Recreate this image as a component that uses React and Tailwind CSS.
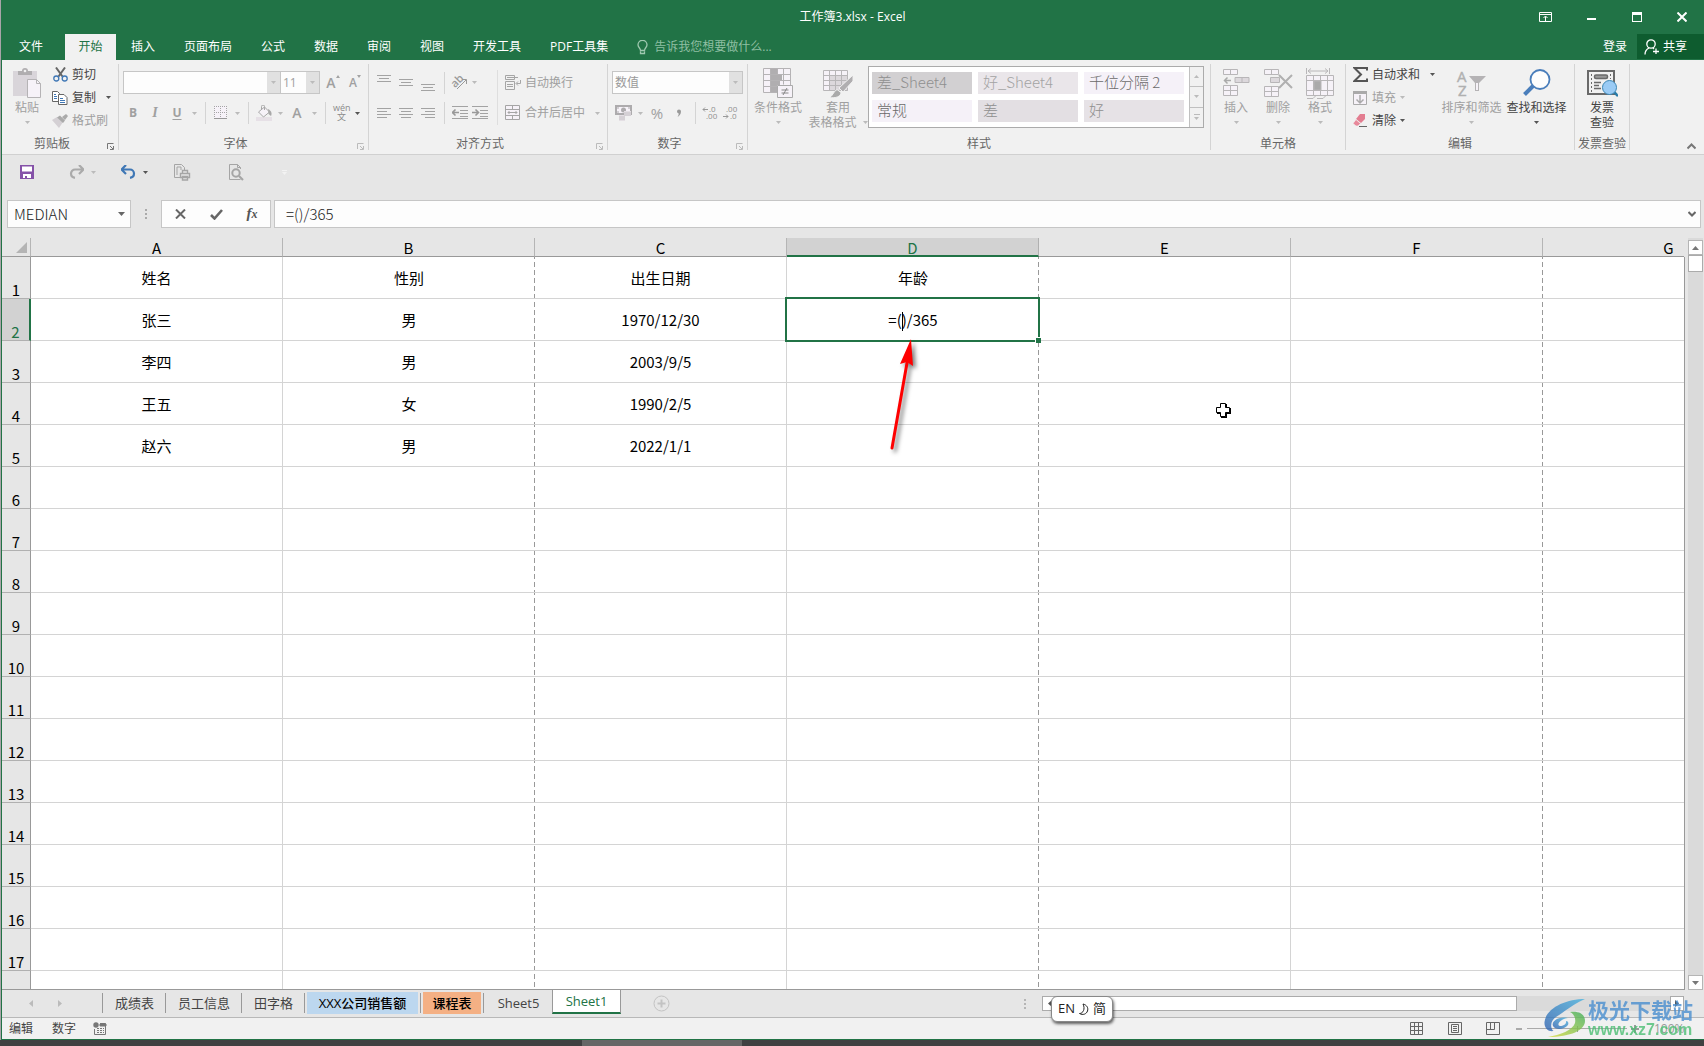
import React from 'react'

const uiFont = "font-['Open_Sans','Noto_Sans_CJK_SC',sans-serif]"
const cellFont = "font-['Noto_Sans_CJK_SC',sans-serif]"

const menuTabs = ['插入', '页面布局', '公式', '数据', '审阅', '视图', '开发工具', 'PDF工具集']

const columns = ['A', 'B', 'C', 'D', 'E', 'F', 'G']

const rows = [
  ['姓名', '性别', '出生日期', '年龄'],
  ['张三', '男', '1970/12/30', ''],
  ['李四', '男', '2003/9/5', ''],
  ['王五', '女', '1990/2/5', ''],
  ['赵六', '男', '2022/1/1', ''],
]

const rowNumbers = Array.from({ length: 18 }, (_, i) => i + 1)

const cellStyles = [
  { name: '差_Sheet4', look: 'bg-[#d2d0d2] text-[#8f8f8f]' },
  { name: '好_Sheet4', look: 'bg-[#eae6ea] text-[#a3a3a3]' },
  { name: '千位分隔 2', look: 'bg-[#f5f1f8] text-[#6a6a6a]' },
  { name: '常规', look: 'bg-[#f5f1f8] text-[#6a6a6a]' },
  { name: '差', look: 'bg-[#e3dfe3] text-[#8f8f8f]' },
  { name: '好', look: 'bg-[#e6e2e6] text-[#8f8f8f]' },
]

/* ---------- small building blocks ---------- */

const Caret = ({ dark }) => (
  <svg width="5" height="3" viewBox="0 0 5 3" className={dark ? 'text-[#555]' : 'text-[#bbb]'}>
    <path d="M0 0h5L2.5 3z" fill="currentColor" />
  </svg>
)

const Drop = ({ label, dark }) => (
  <button aria-label={label} className="flex h-full w-3 items-center justify-center">
    <Caret dark={dark} />
  </button>
)

const Tool = ({ label, className = 'w-5', children }) => (
  <button aria-label={label} className={`flex h-full items-center justify-center text-[#a0a0a0] ${className}`}>
    {children}
  </button>
)

const Sep = () => <div className="mx-[5px] h-[22px] w-px bg-[#d4d4d4]" />

const Group = ({ title, launcher, darkLauncher, className, children }) => (
  <>
    <section className={`flex h-[90px] shrink-0 flex-col ${className}`}>
      <div className="flex h-[72px]">{children}</div>
      <div className={`relative h-[18px] text-center leading-5 text-[#666] ${launcher ? 'pr-4' : ''}`}>
        {title}
        {launcher && (
          <button aria-label={`${title}设置`} className={`absolute right-1 bottom-[2px] ${darkLauncher ? 'text-[#777]' : 'text-[#bbb]'}`}>
            <svg width="7" height="7" viewBox="0 0 7 7" fill="none" stroke="currentColor">
              <path d="M.5 6V.5H6.500M3 3l3 3M6.500 3v3.500H3" />
            </svg>
          </button>
        )}
      </div>
    </section>
    <div className="mt-[2px] h-[86px] w-px shrink-0 bg-[#d4d4d4]" />
  </>
)

const BigButton = ({ icon, label, second, dark, className }) => (
  <button className={`flex flex-col items-center pt-[6px] ${dark ? 'text-[#444]' : 'text-[#a0a0a0]'} ${className}`}>
    <span className="flex h-[30px] items-center">{icon}</span>
    <span className="mt-[2px] leading-[15px] whitespace-nowrap">{label}</span>
    <span className="flex h-[15px] items-center justify-center gap-[6px] leading-[15px] whitespace-nowrap">
      {second}
      {second !== '查验' && <Caret dark={dark} />}
    </span>
  </button>
)

const RowButton = ({ icon, label, dark, arrow }) => (
  <button className={`flex h-[23px] items-center whitespace-nowrap ${dark ? 'text-[#444]' : 'text-[#a0a0a0]'}`}>
    <span className="mr-1 flex w-4 justify-center">{icon}</span>
    <span>{label}</span>
    {arrow && <span className={arrow === 'far' ? 'ml-[10px]' : 'ml-1'}><Caret dark={dark} /></span>}
  </button>
)

const Lines = ({ d }) => (
  <svg width="16" height="22" viewBox="0 0 16 22" fill="none" stroke="#a3a3a3">
    <path d={d} />
  </svg>
)

/* ---------- icons ---------- */

const PasteIcon = () => (
  <svg width="30" height="30" viewBox="0 0 30 30">
    <path d="M1 3h24v25H1z" fill="#d9d5da" />
    <path d="M6 7V3h4a3 3 0 0 1 6 0h4v4z" fill="#b0aeb0" />
    <circle cx="13" cy="3" r="1.300" fill="#f1f1f1" />
    <path d="M15.500 11.500h9l4 4v14h-13z" fill="#f6f2f8" stroke="#b5b3b5" />
    <path d="M24.500 11.500v4h4" fill="none" stroke="#b5b3b5" />
  </svg>
)

const CutIcon = () => (
  <svg width="15" height="15" viewBox="0 0 15 15" fill="none">
    <path d="M3 .5l6.500 9M12 .5l-6.500 9" stroke="#666" strokeWidth="2" />
    <circle cx="3.300" cy="11.500" r="2.500" stroke="#3f77b5" strokeWidth="1.300" />
    <circle cx="11.700" cy="11.500" r="2.500" stroke="#3f77b5" strokeWidth="1.300" />
  </svg>
)

const CopyIcon = () => (
  <svg width="16" height="14" viewBox="0 0 16 14" fill="#fff" stroke="#666">
    <path d="M.5.5h5l2 2v8h-7z" />
    <path d="M6.500 3.500h5.500l3 3v7H6.500z" />
    <path d="M2 3.500h2M2 5.500h3M2 7.500h3M8 7.500h3M8 9.500h5M8 11.500h5" stroke="#3f77b5" />
  </svg>
)

const BrushIcon = () => (
  <svg width="16" height="14" viewBox="0 0 16 14">
    <path d="M0 6l5-3 6 5-4 6z" fill="#d4d0d4" />
    <path d="M5 3.500l3-2 5 5-2 2.500zM10 3l4-3 2 2-3 4z" fill="#aaa" />
  </svg>
)

const BordersIcon = () => (
  <svg width="14" height="14" viewBox="0 0 14 14">
    <path d="M0 0h13v12H0z" fill="#f6f2f8" />
    <path d="M.5 0v12M6.500 0v12M12.500 0v12M0 .5h13M0 6.500h13" stroke="#a5a5a5" strokeDasharray="1 1" />
    <path d="M0 12.500h13" stroke="#999" />
  </svg>
)

const FillIcon = () => (
  <svg width="17" height="16" viewBox="0 0 17 16">
    <path d="M0 12h16v4H0z" fill="#e6e0e6" />
    <path d="M2.500 7l6-5 5 5-6 5z" fill="#f6f2f8" stroke="#a8a8a8" />
    <path d="M5.500 5V1.500a1.500 1.500 0 0 1 3 0V5" fill="none" stroke="#a8a8a8" />
    <path d="M12 4c4 2 4 5 3 7l-2.500-2z" fill="#a8a8a8" />
  </svg>
)

const OrientIcon = () => (
  <svg width="17" height="17" viewBox="0 0 17 17" className="overflow-visible">
    <text x="0" y="11" fontSize="11" fontWeight="600" fill="#999" transform="rotate(-45 6 8)">ab</text>
    <path d="M6 15l9-9M11 5.500h4.500V10" fill="none" stroke="#999" />
  </svg>
)

const Indent = ({ right }) => (
  <svg width="16" height="14" viewBox="0 0 16 14" fill="none" stroke="#a3a3a3">
    <path d="M0 .5h16M8 4.500h8M8 7.500h8M8 10.500h8M0 12.500h16" />
    <path d={right ? 'M0 6.500h6M3.500 3.500l3 3-3 3' : 'M1 6.500h6M3.500 3.500l-3 3 3 3'} stroke="#999" strokeWidth="1.600" />
  </svg>
)

const WrapIcon = () => (
  <svg width="16" height="16" viewBox="0 0 16 16" fill="none" stroke="#a5a5a5">
    <path d="M.5.5h9v4h-9zM.5 6.500h9v8h-9zM2 2.500h11M2 9.500h6M2 11.500h6M15.500 5v3.500h-4M13 6.500l-2 2 2 2" />
  </svg>
)

const MergeIcon = () => (
  <svg width="16" height="16" viewBox="0 0 16 16" fill="#f6f2f8" stroke="#a5a5a5">
    <path d="M.5.5h14v14H.5zM.5 4.500h14M.5 10.500h14M7.500.5v4M7.500 10.500v4" />
    <path d="M3 7.500h9M4.500 6L3 7.500 4.500 9M10.500 6L12 7.500 10.500 9" fill="none" />
  </svg>
)

const MoneyIcon = () => (
  <svg width="17" height="16" viewBox="0 0 17 16">
    <path d="M1 1h15v8H1z" fill="#f6f2f8" stroke="#adabad" strokeWidth="2" />
    <circle cx="8.500" cy="5" r="2.500" fill="#adabad" />
    <path d="M2 3h2M2 7h2M13 3h2" stroke="#adabad" />
    <path d="M9 6h7v5H9zM4 10h6v6H4z" fill="#e4dfe4" />
    <path d="M9 8h7M9 10h7M4 12h6M4 14h6" stroke="#c6c2c6" />
  </svg>
)

const Decimals = ({ top, bottom, more }) => (
  <svg width="16" height="16" viewBox="0 0 16 16" fontSize="8" fill="#8f8f8f" className="overflow-visible">
    <text x={more ? 7 : 4} y="7">{top}</text>
    <text x={more ? 4 : 8} y="14">{bottom}</text>
    <path
      d={more ? 'M1 4.500h5M3 2.500l-2 2 2 2' : 'M1 11.500h5M4 9.500l2 2-2 2'}
      fill="none"
      stroke="#999"
    />
  </svg>
)

const CondIcon = () => (
  <svg width="31" height="30" viewBox="0 0 31 30">
    <path d="M.5.5h27v24H.5z" fill="#f6f2f8" />
    <path d="M8 1h6v23H8zM14 7h5v5h-5zM14 13h3v4h-3z" fill="#b0aeb0" />
    <path d="M.5.5h27v24H.5zM7.500.5v24M14.500.5v6M20.500.5v16M.5 6.500h27M.5 12.500h27M.5 18.500h15" fill="none" stroke="#b5b3b5" />
    <path d="M14.500 17.500h15v12h-15z" fill="#f6f2f8" stroke="#aaa" />
    <path d="M18.500 22h7M18.500 25h7M24 20l-4 7" stroke="#888" fill="none" />
  </svg>
)

const TableFormatIcon = () => (
  <svg width="30" height="29" viewBox="0 0 30 29">
    <path d="M.5 1.500h25v20H.5z" fill="#f6f2f8" />
    <path d="M7 7h18v15H7z" fill="#dcd8dc" />
    <path d="M.5 1.500h24v20H.5zM6.500 1.500v20M12.500 1.500v20M18.500 1.500v20M.5 6.500h24M.5 11.500h24M.5 16.500h24" fill="none" stroke="#b8b6b8" />
    <path d="M30 6v6L20 23l-4-4z" fill="#b0aeb0" stroke="#f1f1f1" />
    <path d="M6 28.500c4-1 4-6 8-8l4 3c0 4-5 6-12 5z" fill="#aaa" stroke="#f1f1f1" />
  </svg>
)

const InsertIcon = () => (
  <svg width="27" height="28" viewBox="0 0 27 28" fill="#f6f2f8" stroke="#b8b6b8">
    <path d="M.5.5h14v5H.5zM7.500.5v5M.5 16.500h14v10H.5zM7.500 16.500v10M.5 21.500h14" />
    <path d="M12 8.500h14v5H12zM19 8.500v5" fill="#dcd8dc" />
    <path d="M2 11.500h6M4.500 8.500l-3 3 3 3" fill="none" strokeWidth="1.500" stroke="#aaa" />
  </svg>
)

const DeleteIcon = () => (
  <svg width="29" height="28" viewBox="0 0 29 28" fill="#f6f2f8" stroke="#b8b6b8">
    <path d="M.5.5h14v5H.5zM7.500.5v5M.5 17.500h14v10H.5zM7.500 17.500v10M.5 22.500h14" />
    <path d="M6.500 8.500h9v5h-9z" fill="#dcd8dc" />
    <path d="M15 6l13 13M28 6L15 19" stroke="#b0b0b0" strokeWidth="2" fill="none" />
  </svg>
)

const FormatIcon = () => (
  <svg width="29" height="31" viewBox="0 0 29 31" fill="#f6f2f8" stroke="#b8b6b8">
    <path d="M.5 7.500h27v20H.5zM7.500 7.500v20M14.500 7.500v20M21.500 7.500v20M.5 12.500h27M.5 22.500h27" />
    <path d="M8 13h7v9H8z" fill="#aaa" />
    <path d="M.5 0v6M23.500 0v6M2 3h20M5 .5L2 3l3 2.500M19 .5L22 3l-3 2.500M1 30.500h6l3-3M11 30.500h6l3-3" fill="none" />
  </svg>
)

const FillDownIcon = () => (
  <svg width="14" height="16" viewBox="0 0 14 16" fill="none" stroke="#aaa">
    <path d="M.5 1.500h13v13H.5z" fill="#f6f2f8" />
    <path d="M0 2.500h14" strokeWidth="3" />
    <path d="M7 5v8M3.500 9.500L7 13l3.500-3.500" strokeWidth="1.500" />
  </svg>
)

const EraserIcon = () => (
  <svg width="14" height="13" viewBox="0 0 14 13">
    <path d="M7 0l5 0 0 5-4 4-5-4z" fill="#e37d90" />
    <path d="M3 5.500l4.500 4L5 12H3L0 9.500z" fill="#e8899b" stroke="#f1f1f1" strokeWidth=".7" />
    <path d="M6 12.500h8" stroke="#666" />
  </svg>
)

const SortIcon = () => (
  <svg width="30" height="28" viewBox="0 0 30 28" className="overflow-visible">
    <text x="0" y="13" fontSize="15" fill="#b0b0b0" stroke="#b0b0b0" strokeWidth=".4">A</text>
    <text x="1" y="27" fontSize="15" fill="#b0b0b0" stroke="#b0b0b0" strokeWidth=".4">Z</text>
    <path d="M12 7h17l-7 7v8h-4v-8z" fill="#b5b3b5" />
    <path d="M19 14h2v7h-2z" fill="#f6f2f8" />
  </svg>
)

const FindIcon = () => (
  <svg width="28" height="28" viewBox="0 0 28 28" fill="none" stroke="#4a7ebb">
    <path d="M10 17l-8.500 8.500" strokeWidth="4" />
    <circle cx="17" cy="10.500" r="9.500" fill="#fdfdfd" strokeWidth="1.800" />
  </svg>
)

const InvoiceIcon = () => (
  <svg width="31" height="27" viewBox="0 0 31 27" fill="none" stroke="#6a6a6a">
    <path d="M1 1h26v23H1z" strokeWidth="2" />
    <path d="M4.500 4v18M23.500 4v5" strokeDasharray="2 2" />
    <rect x="7.500" y="5" width="13" height="3.500" rx="1.500" fill="#999" strokeWidth="1.500" />
    <path d="M7 12.500h7M7 15.500h5M7 18.500h7" strokeWidth="1.400" />
    <path d="M26 21l5 5" stroke="#2a7ba8" strokeWidth="2.500" />
    <circle cx="22.500" cy="17.500" r="7" fill="#9acbf5" stroke="#3d87b5" />
  </svg>
)

const SaveIcon = () => (
  <svg width="14" height="14" viewBox="0 0 14 14">
    <path d="M0 0h14v14H0z" fill="#8552a8" />
    <path d="M2 1.500h10v5H2zM3 9h8v4H3z" fill="#fff" />
    <path d="M5 11h2v2H5z" fill="#8552a8" />
  </svg>
)

const ArrowCurve = ({ color, flip }) => (
  <svg width="15" height="14" viewBox="0 0 15 14" fill="none" stroke={color} strokeWidth="2.200">
    <path d={flip ? 'M10 0l4.500 4.500L10 9M13 4.500H6a4 4 0 0 0-4 4C2 11 4 12.500 6 12.800' : 'M5 0L.5 4.500 5 9M2 4.500h7a4 4 0 0 1 4 4c0 2.500-2 4-4 4.300'} />
  </svg>
)

const QuickPrintIcon = () => (
  <svg width="17" height="17" viewBox="0 0 17 17" fill="none" stroke="#a5a5a5">
    <path d="M6 13.500H.5V.5h7l3 3V6M3 11V3h4v3" />
    <path d="M6.500 9.500h9v4h-9zM8.500 9V6.500h5V9M8.500 12.500h5v3.500h-5z" fill="#e6e6e6" strokeWidth="1.400" />
  </svg>
)

const PreviewIcon = () => (
  <svg width="15" height="17" viewBox="0 0 15 17" fill="none" stroke="#a5a5a5">
    <path d="M11.500 5V3.500l-3-3H.5v15h11M8.500.5v3h3" />
    <circle cx="7" cy="9" r="3.700" strokeWidth="2" />
    <path d="M10 12l4 4" strokeWidth="2.200" />
  </svg>
)

const WatermarkLogo = () => (
  <svg width="42" height="40" viewBox="0 0 42 40">
    <defs>
      <linearGradient id="wb" x1="0" y1="1" x2="1" y2="0">
        <stop offset="0" stopColor="#2f62b0" />
        <stop offset="1" stopColor="#4bb4e0" />
      </linearGradient>
      <linearGradient id="wg" x1="0" y1="1" x2="1" y2="0">
        <stop offset="0" stopColor="#d9dc3c" />
        <stop offset="1" stopColor="#3fae5c" />
      </linearGradient>
    </defs>
    <path d="M41 1C22 1 2 10 .5 24c-.5 6 4 10 9 9-4-4-3-11 4-15C20 14 26 8 41 1z" fill="url(#wb)" />
    <path d="M24 20c-9-2-17 3-15 8 2 4 11 4 15-1 1-2 0-4-2-4 1 3-3 5-6 5-4-1 0-7 8-8z" fill="url(#wb)" />
    <path d="M26 14c9-1 15 2 15 9 0 9-14 16-37 16 12-2 25-7 27-14 1-5-1-9-5-11z" fill="url(#wg)" />
  </svg>
)

/* ---------- page sections ---------- */

const TitleBar = () => (
  <header className="bg-[#217346] text-white">
    <div className="relative flex h-[34px] items-center justify-end">
      <h1 className="absolute inset-x-0 text-center leading-[36px]">工作簿3.xlsx - Excel</h1>
      <button aria-label="功能区显示选项" className="relative flex h-full w-[46px] items-center justify-center">
        <svg width="13" height="10" viewBox="0 0 13 10" fill="none" stroke="#fff">
          <path d="M.5.5h12v9H.5zM1 2.500h11M6.500 9V4.500M4.500 6l2-2 2 2" />
        </svg>
      </button>
      <button aria-label="最小化" className="relative flex h-full w-[46px] items-center justify-center">
        <span className="mt-1 h-[2px] w-[9px] bg-white" />
      </button>
      <button aria-label="最大化" className="relative flex h-full w-[46px] items-center justify-center">
        <span className="h-[10px] w-[10px] border border-t-[3px] border-white" />
      </button>
      <button aria-label="关闭" className="relative flex h-full w-[44px] items-center justify-center">
        <svg width="10" height="10" viewBox="0 0 10 10" stroke="#fff" strokeWidth="2">
          <path d="M.5.5l9 9M9.500.5l-9 9" />
        </svg>
      </button>
    </div>
    <nav className="flex h-[26px] items-center">
      <button className="w-16 pr-1 leading-[22px]">文件</button>
      <button className="mr-[3px] h-full w-[51px] bg-[#f1f1f1] text-[#217346]">开始</button>
      {menuTabs.map((tab) => (
        <button key={tab} className="mr-[5px] px-3 leading-[22px] whitespace-nowrap">{tab}</button>
      ))}
      <label className="ml-3 flex items-center gap-[6px]">
        <svg width="11" height="15" viewBox="0 0 11 15" fill="none" stroke="#9fc9b0" strokeWidth="1.300">
          <path d="M3.500 10.500C3.500 8 1 7.500 1 4.800a4.500 4.500 0 0 1 9 0c0 2.700-2.500 3.200-2.500 5.700zM3.500 11.500v2h4v-2" />
        </svg>
        <input aria-label="告诉我" placeholder="告诉我您想要做什么..." className="w-40 bg-transparent placeholder:text-[#8fbfa3]" />
      </label>
      <button className="ml-auto px-[10px]">登录</button>
      <button className="flex h-[25px] w-[67px] items-center gap-1 self-start bg-[#0e5c2f] pl-[7px]">
        <svg width="15" height="16" viewBox="0 0 15 16" fill="none" stroke="#fff" strokeWidth="1.300">
          <circle cx="7" cy="5" r="4.200" />
          <path d="M1 15.500c0-3.500 2-5.500 4-6.500M9 9l1 1M12 9.500V15M9 12.500h6" />
        </svg>
        共享
      </button>
    </nav>
  </header>
)

const Ribbon = () => (
  <div className="flex h-[95px] shrink-0 border-b border-[#d0d0d0] bg-[#f1f1f1] pt-[2px]">
    <Group title="剪贴板" launcher darkLauncher className="w-[116px]">
      <BigButton className="w-[50px]" icon={<PasteIcon />} label="粘贴" />
      <div className="flex flex-col pt-px">
        <RowButton dark icon={<CutIcon />} label="剪切" />
        <RowButton dark arrow="far" icon={<CopyIcon />} label="复制" />
        <RowButton icon={<BrushIcon />} label="格式刷" />
      </div>
    </Group>

    <Group title="字体" launcher className="w-[249px]">
      <div className="flex flex-col gap-2 pt-[9px] pl-[3px]">
        <div className="flex h-[23px] items-center pl-px">
          <div className="flex h-full w-[158px] border border-[#c6c6c6] bg-[#fdfdfd]">
            <input aria-label="字体" className="min-w-0 flex-1" />
            <button aria-label="选择字体" className="flex w-[13px] items-center justify-center bg-[#e1e1e1]"><Caret /></button>
          </div>
          <div className="-ml-px flex h-full w-10 border border-[#c6c6c6] bg-[#fdfdfd]">
            <input aria-label="字号" defaultValue="11" className="min-w-0 flex-1 pl-[2px] text-[#a0a0a0]" />
            <button aria-label="选择字号" className="flex w-[13px] items-center justify-center bg-[#e1e1e1]"><Caret /></button>
          </div>
          <Tool label="增大字号" className="ml-[2px] w-[22px]">
            <span className="text-sm font-semibold">A</span>
            <svg width="4" height="3" className="mb-3"><path d="M0 3h4L2 0z" fill="#a3a3a3" /></svg>
          </Tool>
          <Tool label="减小字号" className="w-[22px]">
            <span className="text-xs font-semibold">A</span>
            <svg width="4" height="3" className="mb-3"><path d="M0 0h4L2 3z" fill="#a3a3a3" /></svg>
          </Tool>
        </div>
        <div className="flex h-[22px] items-center">
          <Tool label="加粗" className="w-[22px] font-bold">B</Tool>
          <Tool label="倾斜" className="w-[22px] font-['Liberation_Serif',serif] text-sm font-bold italic">I</Tool>
          <Tool label="下划线" className="w-[22px] font-bold underline underline-offset-2">U</Tool>
          <Drop label="下划线样式" />
          <Sep />
          <Tool label="边框"><BordersIcon /></Tool>
          <Drop label="边框样式" />
          <Sep />
          <Tool label="填充颜色"><FillIcon /></Tool>
          <Drop label="选择填充颜色" />
          <Tool label="字体颜色" className="w-[22px] text-sm font-semibold">A</Tool>
          <Drop label="选择字体颜色" />
          <Sep />
          <Tool label="拼音">
            <svg width="18" height="18" viewBox="0 0 18 18" fill="#8a8a8a" className="overflow-visible">
              <text x="1" y="7" fontSize="9">wén</text>
              <text x="5" y="16" fontSize="9">文</text>
            </svg>
          </Tool>
          <Drop label="拼音设置" dark />
        </div>
      </div>
    </Group>

    <Group title="对齐方式" launcher className="w-[238px]">
      <div className="flex flex-col gap-2 pt-[9px] pl-1">
        <div className="flex h-[23px] items-center">
          <Tool label="顶端对齐" className="w-[22px]"><Lines d="M1 3.500h14M3 6.500h10M1 9.500h14" /></Tool>
          <Tool label="垂直居中" className="w-[22px]"><Lines d="M1 7.500h14M3 10.500h10M1 13.500h14" /></Tool>
          <Tool label="底端对齐" className="w-[22px]"><Lines d="M1 12.500h14M3 15.500h10M1 18.500h14" /></Tool>
          <Sep />
          <Tool label="方向" className="w-[18px]"><OrientIcon /></Tool>
          <Drop label="方向选项" />
        </div>
        <div className="flex h-[22px] items-center">
          <Tool label="左对齐" className="w-[22px]"><Lines d="M1 6.500h14M1 9.500h10M1 12.500h14M1 15.500h10" /></Tool>
          <Tool label="居中" className="w-[22px]"><Lines d="M1 6.500h14M3 9.500h10M1 12.500h14M3 15.500h10" /></Tool>
          <Tool label="右对齐" className="w-[22px]"><Lines d="M1 6.500h14M5 9.500h10M1 12.500h14M5 15.500h10" /></Tool>
          <Sep />
          <Tool label="减少缩进量"><Indent /></Tool>
          <Tool label="增加缩进量"><Indent right /></Tool>
        </div>
      </div>
      <div className="mx-[7px] mt-2 h-[55px] w-px bg-[#dedede]" />
      <div className="flex flex-col gap-2 pt-[9px]">
        <button className="flex h-[23px] items-center gap-1 text-[#a0a0a0]"><WrapIcon />自动换行</button>
        <button className="flex h-[22px] items-center gap-1 text-[#a0a0a0]"><MergeIcon />合并后居中<span className="ml-[6px]"><Caret /></span></button>
      </div>
    </Group>

    <Group title="数字" launcher className="w-[139px]">
      <div className="flex flex-col gap-2 pt-[9px] pl-1">
        <div className="flex h-[23px] w-[131px] border border-[#c6c6c6] bg-[#fdfdfd]">
          <select aria-label="数字格式" className="min-w-0 flex-1 appearance-none pl-[2px] text-[#999]">
            <option>数值</option>
            <option>常规</option>
          </select>
          <span className="flex w-[13px] items-center justify-center bg-[#e1e1e1]"><Caret /></span>
        </div>
        <div className="flex h-[22px] items-center">
          <Tool label="会计数字格式" className="w-[22px]"><MoneyIcon /></Tool>
          <Drop label="货币选项" />
          <Tool label="百分比样式" className="w-[22px] text-[15px]">%</Tool>
          <Tool label="千位分隔样式" className="w-[22px]">
            <svg width="6" height="8" viewBox="0 0 6 8"><path d="M1 2.500a2 2 0 0 1 4 0C5 5 3.500 7 1.500 8 2.500 6.500 2.700 5.500 2.700 4.500A2 2 0 0 1 1 2.500z" fill="#999" /></svg>
          </Tool>
          <Sep />
          <Tool label="增加小数位数" className="w-[18px]"><Decimals more top=".0" bottom=".00" /></Tool>
          <Tool label="减少小数位数" className="w-[22px]"><Decimals top=".00" bottom=".0" /></Tool>
        </div>
      </div>
    </Group>

    <Group title="样式" className="w-[462px]">
      <BigButton className="w-[60px] shrink-0" icon={<CondIcon />} label="条件格式" />
      <BigButton className="w-[60px] shrink-0" icon={<TableFormatIcon />} label="套用" second="表格格式" />
      <div className="mt-1 flex h-[62px] border border-[#ababab] bg-white">
        <div className="grid grid-cols-3 gap-[6px] p-[5px] pl-[3px]">
          {cellStyles.map((s) => (
            <button key={s.name} className={`h-[22px] w-[100px] pb-[2px] pl-[5px] text-left text-[15px] leading-5 font-light ${cellFont} ${s.look}`}>{s.name}</button>
          ))}
        </div>
        <div className="flex w-[14px] flex-col divide-y divide-[#c0c0c0] border-l border-[#c0c0c0] bg-[#f1f1f1]">
          <button aria-label="上一行" className="flex flex-1 items-center justify-center"><span className="rotate-180"><Caret /></span></button>
          <button aria-label="下一行" className="flex flex-1 items-center justify-center"><Caret /></button>
          <button aria-label="其他样式" className="flex flex-1 flex-col items-center justify-center gap-[2px]"><span className="h-px w-[6px] bg-[#bbb]" /><Caret /></button>
        </div>
      </div>
    </Group>

    <Group title="单元格" className="w-[134px]">
      <div className="flex pl-1">
        <BigButton className="w-[42px]" icon={<InsertIcon />} label="插入" />
        <BigButton className="w-[42px]" icon={<DeleteIcon />} label="删除" />
        <BigButton className="w-[42px]" icon={<FormatIcon />} label="格式" />
      </div>
    </Group>

    <Group title="编辑" className="w-[228px]">
      <div className="flex w-[93px] flex-col pt-px pl-[6px]">
        <RowButton
          dark
          arrow="far"
          label="自动求和"
          icon={<svg width="15" height="15" viewBox="0 0 15 15" fill="none" stroke="#555" strokeWidth="2"><path d="M14 3.500V1H1.500L8 7.500 1.500 14H14v-2.500" /></svg>}
        />
        <RowButton arrow="near" icon={<FillDownIcon />} label="填充" />
        <RowButton dark arrow="near" icon={<EraserIcon />} label="清除" />
      </div>
      <BigButton className="w-[65px]" icon={<SortIcon />} label="排序和筛选" />
      <BigButton className="w-[65px]" dark icon={<FindIcon />} label="查找和选择" />
    </Group>

    <Group title="发票查验" className="w-[54px]">
      <BigButton className="w-full" dark icon={<InvoiceIcon />} label="发票" second="查验" />
    </Group>

    <button aria-label="折叠功能区" className="mr-2 mb-1 ml-auto self-end">
      <svg width="9" height="7" viewBox="0 0 9 7" fill="none" stroke="#777" strokeWidth="2"><path d="M.5 5.500l4-4 4 4" /></svg>
    </button>
  </div>
)

const QuickAccess = () => (
  <div className="flex h-[45px] shrink-0 items-start bg-[#e6e6e6] pl-[15px]">
    <div className="flex h-[34px] items-center">
      <Tool label="保存" className="w-5"><SaveIcon /></Tool>
      <Tool label="恢复" className="ml-7 w-[22px]"><ArrowCurve color="#aaa" flip /></Tool>
      <Drop label="恢复列表" />
      <Tool label="撤消" className="ml-[18px] w-[22px]"><ArrowCurve color="#3f77b5" /></Tool>
      <Drop label="撤消列表" dark />
      <Tool label="快速打印" className="ml-[21px] w-5"><QuickPrintIcon /></Tool>
      <Tool label="打印预览" className="ml-[34px] w-5"><PreviewIcon /></Tool>
      <button aria-label="自定义快速访问工具栏" className="ml-9 flex flex-col items-center gap-px">
        <span className="h-px w-[5px] bg-[#f3f3f3]" />
        <svg width="5" height="3"><path d="M0 0h5L2.500 3z" fill="#f3f3f3" /></svg>
      </button>
    </div>
  </div>
)

const FormulaBar = () => (
  <div className={`mb-[10px] flex h-7 shrink-0 pr-[3px] pl-[5px] text-[15px] font-light text-[#222] ${cellFont}`}>
    <div className="flex w-[124px] border border-[#c6c6c6] bg-[#fdfdfd]">
      <input aria-label="名称框" defaultValue="MEDIAN" className="min-w-0 flex-1 pb-px pl-[6px]" />
      <button aria-label="名称列表" className="flex w-[18px] items-center justify-center">
        <svg width="7" height="4"><path d="M0 0h7L3.500 4z" fill="#666" /></svg>
      </button>
    </div>
    <div className="flex w-[30px] flex-col items-center justify-center gap-[2px]">
      <span className="h-[2px] w-[2px] bg-[#aaa]" />
      <span className="h-[2px] w-[2px] bg-[#aaa]" />
      <span className="h-[2px] w-[2px] bg-[#aaa]" />
    </div>
    <div className="flex w-[110px] items-center border border-[#c6c6c6] bg-[#fdfdfd]">
      <button aria-label="取消" className="flex h-full flex-1 items-center justify-center">
        <svg width="11" height="10" viewBox="0 0 11 10" stroke="#666" strokeWidth="2"><path d="M1 .5l9 9M10 .5l-9 9" /></svg>
      </button>
      <button aria-label="输入" className="flex h-full flex-1 items-center justify-center">
        <svg width="13" height="11" viewBox="0 0 13 11" fill="none" stroke="#666" strokeWidth="2.600"><path d="M1 6l3.500 3.500L12 1" /></svg>
      </button>
      <button aria-label="插入函数" className="flex-1 pb-px font-['Liberation_Serif',serif] text-[15px] leading-5 font-bold text-[#555] italic">
        f<span className="text-[12px]">x</span>
      </button>
    </div>
    <div className="ml-[3px] flex flex-1 border border-[#c6c6c6] bg-[#fdfdfd]">
      <input aria-label="编辑栏" defaultValue="=()/365" className="min-w-0 flex-1 pb-px pl-[11px]" />
      <button aria-label="展开编辑栏" className="flex w-4 items-center justify-center">
        <svg width="8" height="6" viewBox="0 0 8 6" fill="none" stroke="#666" strokeWidth="2"><path d="M.5 1L4 4.500 7.500 1" /></svg>
      </button>
    </div>
  </div>
)

/* manual page breaks run down the right edge of B, D and F */
const pageBreak = 'w-[252px] bg-[linear-gradient(#999_0_5px,transparent_5px)] bg-[length:1px_8px] bg-right-top bg-repeat-y'

const Grid = () => (
  <div className="relative min-h-0 flex-1 overflow-hidden border-b border-[#999]">
    <div className="absolute inset-x-0 top-[19px] bottom-0 bg-white" />
    <table className={`relative w-[1793px] table-fixed border-separate border-spacing-0 text-[15px] leading-4 ${cellFont}`}>
      <colgroup>
        <col className="w-[29px]" />
        {columns.map((c) => (
          <col key={c} className={'BDF'.includes(c) ? pageBreak : 'w-[252px]'} />
        ))}
      </colgroup>
      <thead>
        <tr className="h-[19px] leading-4">
          <th aria-label="全选" className="border-r border-b border-[#999] border-r-[#b5b5b5] bg-[#e6e6e6] p-0">
            <svg width="11" height="11" className="ml-[14px]"><path d="M11 0v11H0z" fill="#b4b4b4" /></svg>
          </th>
          {columns.map((c) =>
            c === 'D' ? (
              <th key={c} className="border-r border-b-2 border-[#217346] border-r-[#b0b0b0] bg-[#d2d2d2] p-0 align-bottom leading-[15px] font-normal text-[#217346]">{c}</th>
            ) : (
              <th key={c} className="border-r border-b border-[#999] border-r-[#b5b5b5] bg-[#e6e6e6] p-0 align-bottom font-normal text-black">{c}</th>
            )
          )}
        </tr>
      </thead>
      <tbody>
        {rowNumbers.map((n) => (
          <tr key={n} className="h-[42px]">
            {n === 2 ? (
              <th className="border-r-2 border-b border-[#217346] border-b-[#b0b0b0] bg-[#d2d2d2] p-0 align-bottom font-normal text-[#217346]">{n}</th>
            ) : (
              <th className="border-r border-b border-[#999] border-b-[#b0b0b0] bg-[#e6e6e6] p-0 align-bottom font-normal text-black">{n}</th>
            )}
            {columns.map((c, i) => (
              <td key={c} className={`relative border-b border-[#d4d4d4] p-0 text-center font-normal text-black ${'BDF'.includes(c) ? '' : 'border-r'}`}>
                {n === 2 && c === 'D' ? (
                  <>
                    =(<span className="absolute top-[13px] h-[19px] w-px bg-black" />)/365
                    <span className="absolute -top-[2px] -right-px -bottom-[2px] -left-[2px] z-10 border-2 border-[#217346]" />
                    <span className="absolute -right-[2px] -bottom-[3px] z-10 h-[6px] w-[6px] border-t border-l border-white bg-[#217346]" />
                  </>
                ) : (
                  rows[n - 1]?.[i]
                )}
              </td>
            ))}
          </tr>
        ))}
      </tbody>
    </table>

    {/* red pointer under D2 */}
    <svg width="50" height="122" viewBox="0 0 50 122" className="absolute top-[101px] left-[880px] z-20 drop-shadow-[3px_3px_2px_rgba(0,0,0,0.5)]">
      <path d="M10 109L25 24" stroke="#fe0000" strokeWidth="3" strokeLinecap="round" />
      <path d="M29 0l2 27-6-4-7 2z" fill="#fe0000" />
    </svg>

    {/* cell cursor */}
    <svg width="16" height="16" viewBox="0 0 16 16" className="absolute top-[164px] left-[1213px]">
      <path d="M6 2h6v4h4v6h-4v4H6v-4H2V6h4z" fill="#000" />
      <path d="M5.500 1.500h5v4h4v5h-4v4h-5v-4h-4v-5h4z" fill="#fff" stroke="#000" />
    </svg>
  </div>
)

const VerticalScroll = () => (
  <div className="mr-px ml-[3px] flex w-[15px] flex-col bg-[#dadada] pt-[2px]">
    <button aria-label="向上滚动" className="flex h-[15px] items-center justify-center border border-[#b5b5b5] bg-white">
      <svg width="7" height="4"><path d="M0 4h7L3.500 0z" fill="#777" /></svg>
    </button>
    <div className="h-[17px] border border-[#ababab] bg-white" />
    <button aria-label="向下滚动" className="mt-auto flex h-[15px] items-center justify-center border border-[#b5b5b5] bg-white">
      <svg width="7" height="4"><path d="M0 0h7L3.500 4z" fill="#777" /></svg>
    </button>
  </div>
)

const plainTab = 'h-5 border-l border-[#999] pr-[11px] pl-3 leading-[17px] text-[#444]'

const SheetTabs = () => (
  <div className="flex h-7 shrink-0 items-start border-b border-[#b8b8b8] bg-[#e6e6e6] text-[13px]">
    <div className="flex h-[26px] w-[100px] items-center gap-[25px] pl-[27px]">
      <button aria-label="上一张"><svg width="4" height="7"><path d="M4 0v7L0 3.500z" fill="#bbb" /></svg></button>
      <button aria-label="下一张"><svg width="4" height="7"><path d="M0 0v7l4-3.500z" fill="#bbb" /></svg></button>
    </div>
    <div className="flex shrink-0 pt-[3px] whitespace-nowrap">
      <button className={plainTab}>成绩表</button>
      <button className={plainTab}>员工信息</button>
      <button className={plainTab}>田字格</button>
      <div className="h-5 border-l border-[#999] px-[2px]">
        <button className="-mt-px h-[22px] w-[111px] bg-[#bcd7ef] leading-[19px] font-medium text-black">XXX公司销售额</button>
      </div>
      <div className="h-5 border-l border-[#999] px-[2px]">
        <button className="-mt-px h-[22px] w-[58px] bg-[#f4b084] leading-[19px] font-medium text-black">课程表</button>
      </div>
      <button className={`${plainTab} w-[69px]`}>Sheet5</button>
    </div>
    <button className="-mt-px h-[25px] w-[69px] shrink-0 border-x border-b-2 border-[#999] border-b-[#217346] bg-white pt-px leading-[22px] text-[#217346]">Sheet1</button>
    <button aria-label="新工作表" className="mt-[5px] ml-8">
      <svg width="17" height="17" viewBox="0 0 17 17" fill="none" stroke="#c3c3c3"><circle cx="8.500" cy="8.500" r="7.500" /><path d="M8.500 4.500v8M4.500 8.500h8" strokeWidth="2" /></svg>
    </button>
    <div className="ml-auto flex h-[14px] w-[680px] shrink-0 items-center self-center pr-5">
      <svg width="2" height="10" className="mr-4"><path d="M0 0h2v2H0zM0 4h2v2H0zM0 8h2v2H0z" fill="#b5b5b5" /></svg>
      <div className="flex h-[15px] flex-1 bg-[#dadada]">
        <button aria-label="向左滚动" className="flex w-4 items-center justify-center border border-[#ababab] bg-white">
          <svg width="4" height="7"><path d="M4 0v7L0 3.500z" fill="#555" /></svg>
        </button>
        <div className="mr-auto w-[459px] border border-l-0 border-[#ababab] bg-white" />
        <button aria-label="向右滚动" className="flex w-[14px] items-center justify-center border border-[#ababab] bg-white">
          <svg width="4" height="7"><path d="M0 0v7l4-3.500z" fill="#555" /></svg>
        </button>
      </div>
    </div>
  </div>
)

const StatusBar = () => (
  <footer className="flex h-[22px] shrink-0 items-center border-b border-[#217346] bg-[#f1f1f1] pr-5 pl-[7px] leading-5 text-[#444]">
    <span>编辑</span>
    <span className="ml-[19px]">数字</span>
    <button aria-label="录制宏" className="ml-[17px]">
      <svg width="14" height="13" viewBox="0 0 14 13" fill="none" stroke="#777">
        <path d="M1.500 7v5.500h11v-11H7" />
        <path d="M7 2h6v2H7z" fill="#777" />
        <path d="M4 6.500h7M4 8.500h7M4 10.500h7" strokeDasharray="2 1" />
        <circle cx="3" cy="3" r="2.700" fill="#777" stroke="none" />
      </svg>
    </button>
    <div className="ml-auto flex items-center gap-6">
      <button aria-label="普通">
        <svg width="14" height="13" viewBox="0 0 14 13" fill="none" stroke="#666"><path d="M.5.5h12v12H.5zM4.500 0v13M8.500 0v13M0 4.500h13M0 8.500h13" /></svg>
      </button>
      <button aria-label="页面布局视图">
        <svg width="14" height="13" viewBox="0 0 14 13" fill="none" stroke="#666"><path d="M.5.5h13v12H.5zM3.500 2.500h7v8h-7zM5 4.500h4M5 6.500h4M5 8.500h4" /></svg>
      </button>
      <button aria-label="分页预览">
        <svg width="14" height="13" viewBox="0 0 14 13" fill="none" stroke="#666"><path d="M.5.5h13v12H.5zM.5 7.500h8v-7M4.500.5v7" /></svg>
      </button>
    </div>
    <button aria-label="缩小" className="ml-4 h-[2px] w-[6px] bg-[#aaa]" />
    <input
      type="range"
      aria-label="缩放"
      defaultValue="50"
      className="ml-[5px] h-3 w-[100px] appearance-none bg-[linear-gradient(#aaa,#aaa)] bg-[length:100%_1px] bg-center bg-no-repeat [&::-webkit-slider-thumb]:h-[6px] [&::-webkit-slider-thumb]:w-px [&::-webkit-slider-thumb]:appearance-none [&::-webkit-slider-thumb]:bg-[#999]"
    />
    <button aria-label="放大" className="ml-1">
      <svg width="8" height="8" viewBox="0 0 8 8" stroke="#999" strokeWidth="2"><path d="M4 0v8M0 4h8" /></svg>
    </button>
    <span className="ml-[15px] w-[30px] text-[#999]">100%</span>
  </footer>
)

const App = () => {
  return (
    <div className={`flex h-screen flex-col overflow-hidden bg-[#404041] text-xs ${uiFont}`}>
      <div className="relative flex min-h-0 flex-1 flex-col border-l border-[#a9a4a9] bg-[#e6e6e6]">
        <TitleBar />
        <main className="flex min-h-0 flex-1 flex-col border-l border-[#217346]">
          <Ribbon />
          <QuickAccess />
          <FormulaBar />
          <div className="flex min-h-0 flex-1">
            <Grid />
            <div className="mt-[19px] w-px bg-[#999]" />
            <VerticalScroll />
          </div>
          <SheetTabs />
          <StatusBar />
        </main>

        {/* input method indicator */}
        <div className="absolute right-[591px] bottom-[18px] flex h-[26px] w-[62px] items-center justify-center gap-1 rounded-md border border-[#888] bg-white text-[13px] text-[#222] shadow-[1px_2px_3px_rgba(0,0,0,0.6)]">
          EN
          <svg width="10" height="13" viewBox="0 0 10 13" fill="none" stroke="#222"><path d="M4 1c4 1 5.500 4 4.500 7S4 12.500.5 10.500C4 10.500 6.500 6 4 1z" /></svg>
          简
        </div>

        {/* site mark */}
        <a href="#" className="absolute right-[11px] bottom-[2px] flex gap-[2px] opacity-80">
          <WatermarkLogo />
          <span className="flex flex-col">
            <span className="text-[21px] leading-6 font-bold text-[#4a8fd0]">极光下载站</span>
            <span className="font-['Liberation_Sans',sans-serif] text-base leading-4 font-bold text-[#4cbf74]">www.xz7.com</span>
          </span>
        </a>
      </div>
      <div className="flex h-[6px] shrink-0">
        <div className="ml-[582px] w-40 bg-[#666]" />
      </div>
    </div>
  )
}

export default App
